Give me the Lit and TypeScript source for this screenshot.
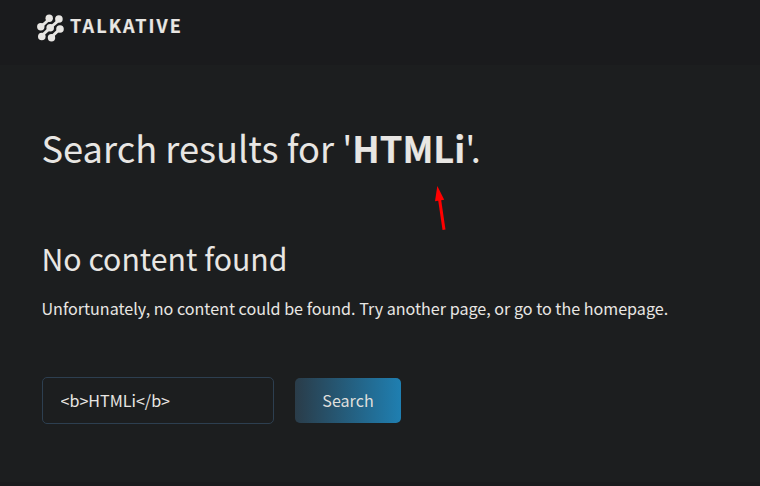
import { LitElement, html, css } from "lit";
import { customElement } from "lit/decorators.js";

@customElement("app-root")
class AppRoot extends LitElement {
  static styles = css`
    :host {
      display: block;
      position: relative;
      width: 760px;
      height: 486px;
      overflow: hidden;
      box-sizing: border-box;
      background: #1c1e1f;
      color: #e8e6e3;
      font-family: "Noto Sans CJK SC", "Noto Sans", sans-serif;
    }
    * { box-sizing: border-box; }
    header {
      display: flex;
      align-items: flex-start;
      height: 65px;
      padding: 13px 0 0 36px;
      background: #1a1b1d;
    }
    .logo { display: block; width: 30px; height: 30px; }
    .brand {
      margin: 0 0 0 4px;
      font-size: 18px;
      line-height: 24px;
      font-weight: 700;
      letter-spacing: 2.1px;
      -webkit-text-stroke: 0.2px currentColor;
    }
    main { padding: 0 42px 0 41.5px; height: 417px; }
    h1, h2, p { margin: 0; white-space: nowrap; }
    h1 {
      padding-top: 53px;
      font-size: 36.25px;
      line-height: 58px;
      font-weight: 400;
    }
    h1 b { font-weight: 700; -webkit-text-stroke: 0.2px currentColor; }
    h2 {
      margin-top: 59px;
      font-size: 30.22px;
      line-height: 46px;
      font-weight: 400;
    }
    p {
      margin-top: 13px;
      font-size: 16.12px;
      line-height: 28px;
    }
    form { display: flex; align-items: center; gap: 21px; margin: 55px 0 0 0.5px; }
    input {
      width: 232px;
      height: 47px;
      padding: 0 17px 2px 17.5px;
      border: 1px solid #2d3f50;
      border-radius: 5px;
      background: transparent;
      color: inherit;
      font: 400 16.1px "Noto Sans CJK SC", sans-serif;
      outline: none;
    }
    button {
      width: 106px;
      height: 45px;
      padding: 0 0 2px;
      border: 0;
      border-radius: 5px;
      background: linear-gradient(90deg, #2a3c49, #1f7fb1);
      color: #dfdfdc;
      font: 400 16.1px "Noto Sans CJK SC", sans-serif;
    }
    footer { height: 4px; background: #1a1b1d; }
    .arrow { position: absolute; left: 430px; top: 184px; }
  `;

  render() {
    return html`
      <header>
        <svg class="logo" viewBox="36 13 30 30" fill="#e8e6e3" stroke="#e8e6e3">
          <g stroke-width="2.900" fill="none">
            <path d="M49.200 18.300 C46.500 23 45 22.500 40.800 26.800M58.900 19 C56.200 24 54.500 23.500 50.200 27.800 C46 32.500 45 31.500 41.800 36.500M60 29 C56 33 55 32.500 51.500 37.700" />
          </g>
          <g stroke="none">
            <circle cx="49.200" cy="18.300" r="3.700" />
            <circle cx="58.900" cy="19" r="3.800" />
            <circle cx="40.800" cy="26.800" r="3.700" />
            <circle cx="50.200" cy="27.800" r="3.800" />
            <circle cx="60" cy="29" r="3.800" />
            <circle cx="41.800" cy="36.500" r="3.800" />
            <circle cx="51.500" cy="37.700" r="3.700" />
          </g>
        </svg>
        <div class="brand">TALKATIVE</div>
      </header>
      <main>
        <h1>Search results for '<b>HTMLi</b>'.</h1>
        <h2>No content found</h2>
        <p>Unfortunately, no content could be found. Try another page, or go to the homepage.</p>
        <form @submit=${(e: Event) => e.preventDefault()}>
          <input type="text" .value=${"<b>HTMLi</b>"} aria-label="Search" />
          <button type="submit">Search</button>
        </form>
      </main>
      <footer></footer>
      <svg class="arrow" width="24" height="50" viewBox="430 184 24 50" fill="#ff0000">
        <path d="M437.300 186 L444.200 199.700 L435 201.300 Z" />
        <path d="M439.500 199 L444 229.700" stroke="#ff0000" stroke-width="3" />
      </svg>
    `;
  }
}
